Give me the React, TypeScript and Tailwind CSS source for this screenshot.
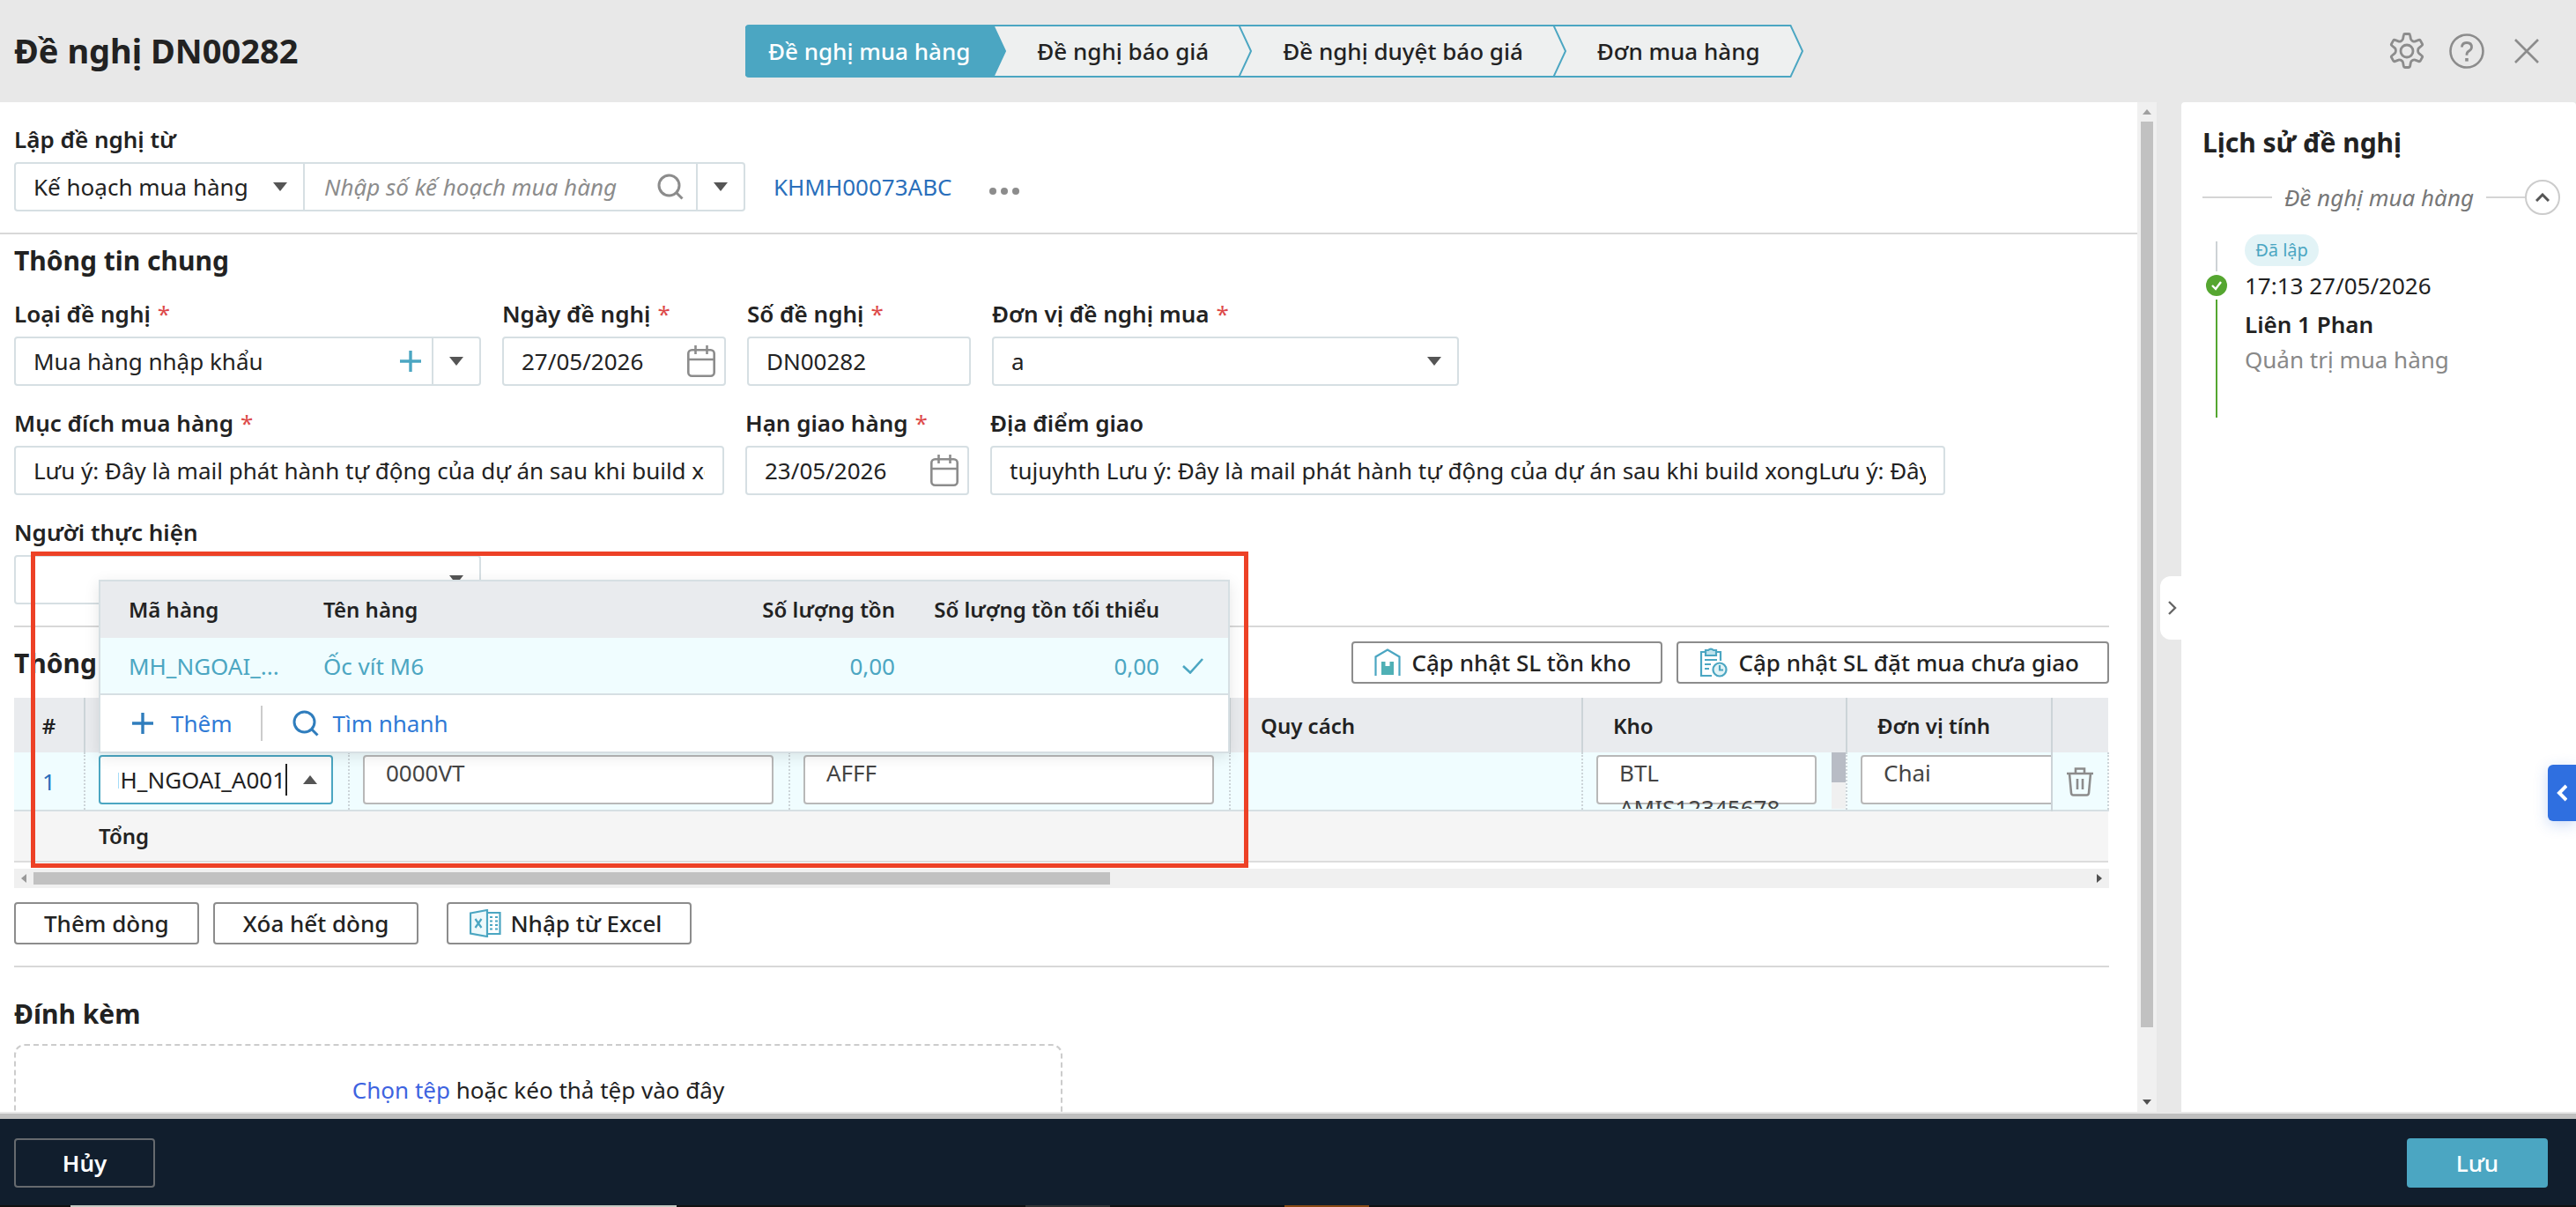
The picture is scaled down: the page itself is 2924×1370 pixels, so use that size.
import { useEffect, useRef } from "react";
import type { ReactNode } from "react";

type IconProps = { className?: string };

const controlClass =
  "flex h-14 items-center rounded-[4px] border-2 border-[#d6dfe3] bg-white";

/* ---------- Icons ---------- */

function GearIcon() {
  return (
    <svg viewBox="0 0 40 42" className="h-[42px] w-10" fill="none" stroke="#8c8c8c" strokeWidth="2.8" strokeLinejoin="round">
      <path d="M16.4 2.800q.2-1.300 1.500-1.300h4.200q1.300 0 1.500 1.300l.8 4.200q.3 1.500 1.600 2.200l.8.500q1.300.8 2.700.2l4-1.500q1.200-.4 1.900.700l2 3.600q.7 1.200-.4 2l-3.200 2.700q-1.200 1-1.200 2.500v1.200q0 1.500 1.200 2.500l3.200 2.700q1.100.8.4 2l-2 3.600q-.7 1.100-1.900.7l-4-1.500q-1.400-.6-2.700.2l-.8.5q-1.300.7-1.600 2.200l-.8 4.200q-.2 1.300-1.500 1.300h-4.200q-1.300 0-1.500-1.300l-.8-4.200q-.3-1.500-1.600-2.200l-.8-.5q-1.300-.8-2.700-.2l-4 1.500q-1.200.4-1.900-.7l-2-3.600q-.7-1.200.4-2l3.200-2.700q1.200-1 1.200-2.500v-1.200q0-1.500-1.200-2.500l-3.200-2.700q-1.100-.8-.4-2l2-3.600q.7-1.100 1.900-.7l4 1.500q1.400.6 2.700-.2l.8-.5q1.300-.7 1.600-2.200z" />
      <circle cx="20" cy="21" r="7" />
    </svg>
  );
}

function HelpIcon() {
  return (
    <svg viewBox="0 0 40 40" className="size-10" fill="none" stroke="#8c8c8c" strokeWidth="2.6">
      <circle cx="20" cy="20" r="18.500" />
      <path d="M14.500 15.500q0-5 5.500-5t5.500 5q0 2.600-2.800 4.300-2.700 1.700-2.700 4v1" strokeWidth="2.800" />
      <path d="M20 28v3.600" strokeWidth="3.600" />
    </svg>
  );
}

function CloseIcon() {
  return (
    <svg viewBox="0 0 28 28" className="size-7" stroke="#8c8c8c" strokeWidth="2.600">
      <path d="M1 1l26 26M27 1L1 27" />
    </svg>
  );
}

function SearchIcon({ className = "" }: IconProps) {
  return (
    <svg viewBox="0 0 30 30" className={`size-[30px] shrink-0 ${className}`} fill="none" stroke="currentColor" strokeWidth="3">
      <circle cx="13.500" cy="13.500" r="11.500" />
      <path d="M22 22l6.500 6.500" />
    </svg>
  );
}

function PlusIcon({ className = "" }: IconProps) {
  return (
    <svg viewBox="0 0 24 24" className={`size-6 shrink-0 ${className}`} stroke="currentColor" strokeWidth="3.4">
      <path d="M12 0v24M0 12h24" />
    </svg>
  );
}

function CalendarIcon() {
  return (
    <svg viewBox="0 0 32 36" className="h-9 w-8 shrink-0" fill="none" stroke="#8c8c8c" strokeWidth="2.600">
      <rect x="1.300" y="5.300" width="29.400" height="29.400" rx="4" />
      <path d="M1 16h30M9.500 0v10M22.500 0v10" />
    </svg>
  );
}

function Caret({ className = "" }: IconProps) {
  return (
    <svg viewBox="0 0 16 10" className={`h-[10px] w-4 shrink-0 ${className}`} fill="#555">
      <path d="M0 0h16L8 10z" />
    </svg>
  );
}

function WarehouseIcon() {
  return (
    <svg viewBox="0 0 30 32" className="h-8 w-[30px] shrink-0" fill="none" stroke="#4ba6c2" strokeWidth="2.200">
      <path d="M1.500 31V9.500L15 1.500l13.500 8V31" />
      <path d="M8 30V15h4.500v5h5v-5H22v15z" fill="#4fb0b5" stroke="none" />
    </svg>
  );
}

function OrderClockIcon() {
  return (
    <svg viewBox="0 0 32 34" className="h-[34px] w-8 shrink-0" fill="none" stroke="#4ba6c2" strokeWidth="2.200">
      <path d="M14 32H2V5h4M20 5h4v10" />
      <path d="M7 3h3q3-3 6 0h3v6H7z" fill="#bfe2ec" />
      <path d="M6 14h14M6 19h7M6 24h5" />
      <circle cx="23" cy="25" r="7.500" fill="#e2f3f6" />
      <path d="M23 20v5.500h4" />
    </svg>
  );
}

function ExcelIcon() {
  return (
    <svg viewBox="0 0 36 32" className="h-8 w-9 shrink-0" fill="none" stroke="#4ba6c2" strokeWidth="2.200">
      <path d="M1 4.500L20 1v30L1 27.500z" fill="#eef9fb" />
      <path d="M20 4h14.500v24H20" />
      <path d="M6.500 11l7 10M13.500 11l-7 10" />
      <path d="M23 9h3M29 9h3M23 13.500h3M29 13.500h3M23 18h3M29 18h3M23 22.500h3M29 22.500h3" />
    </svg>
  );
}

function TrashIcon() {
  return (
    <svg viewBox="0 0 30 34" className="h-[34px] w-[30px]" fill="none" stroke="#8c8c8c" strokeWidth="2.600">
      <path d="M0 8h30M10 8V2.500h10V8M3 8l2 22q.2 2.500 2.500 2.500h15q2.300 0 2.500-2.500l2-22M12 14v12M18 14v12" />
    </svg>
  );
}

/* ---------- Form parts ---------- */

function Field({
  id,
  label,
  required,
  className = "",
  children,
}: {
  id: string;
  label: string;
  required?: boolean;
  className?: string;
  children: ReactNode;
}) {
  return (
    <div className={className}>
      <label htmlFor={id} className="flex h-12 items-center pb-1 font-semibold">
        {label}
        {required && <span className="ml-2 font-normal text-[#dd4a4a]">*</span>}
      </label>
      {children}
    </div>
  );
}

function TextField({ id, value }: { id: string; value: string }) {
  return (
    <div className={`${controlClass} px-5`}>
      <input id={id} defaultValue={value} className="w-full min-w-0 outline-none" />
    </div>
  );
}

function DateField({ id, value }: { id: string; value: string }) {
  return (
    <div className={`${controlClass} pr-2.5 pl-5`}>
      <input id={id} defaultValue={value} className="w-full min-w-0 outline-none" />
      <button type="button" aria-label="Chọn ngày">
        <CalendarIcon />
      </button>
    </div>
  );
}

function SelectField({ id, value }: { id: string; value: string }) {
  return (
    <div className="relative">
      <select
        id={id}
        defaultValue={value}
        className="h-14 w-full appearance-none rounded-[4px] border-2 border-[#d6dfe3] bg-white px-5 outline-none"
      >
        <option>{value}</option>
      </select>
      <Caret className="pointer-events-none absolute top-[23px] right-5" />
    </div>
  );
}

function OutlineButton({ children, className = "" }: { children: ReactNode; className?: string }) {
  return (
    <button
      type="button"
      className={`flex h-12 items-center rounded-[4px] border-2 border-[#8c8c8c] bg-white font-medium ${className}`}
    >
      {children}
    </button>
  );
}

/* ---------- Header ---------- */

const STEPS = ["Đề nghị mua hàng", "Đề nghị báo giá", "Đề nghị duyệt báo giá", "Đơn mua hàng"];

function Stepper() {
  return (
    <ol className="flex h-[60px] rounded-l-[4px] border-y-2 border-[#4ba6c2] font-medium">
      {STEPS.map((step, i) => (
        <li
          key={step}
          className={
            i === 0
              ? "relative flex items-center bg-[#4ba6c2] px-[26px] text-white"
              : "relative flex items-center bg-[#eef0f0] pr-[34px] pl-[50px]"
          }
        >
          {step}
          <svg viewBox="0 0 16 60" className="absolute -top-0.5 left-full z-10 h-[60px] w-4">
            <path d="M0 1l14 29L0 59z" fill={i === 0 ? "#4ba6c2" : "#eef0f0"} />
            <path d="M0 0l14 30L0 60" fill="none" stroke="#4ba6c2" strokeWidth="2" />
          </svg>
        </li>
      ))}
    </ol>
  );
}

function Header() {
  return (
    <header className="flex h-[116px] shrink-0 items-center bg-[#e8e8e8] pr-[42px] pl-4">
      <h1 className="w-[830px] pb-0.5 text-[38px] font-bold">Đề nghị DN00282</h1>
      <Stepper />
      <div className="ml-auto flex items-center gap-7">
        <button type="button" aria-label="Thiết lập">
          <GearIcon />
        </button>
        <button type="button" aria-label="Trợ giúp">
          <HelpIcon />
        </button>
        <button type="button" aria-label="Đóng" className="ml-1.5">
          <CloseIcon />
        </button>
      </div>
    </header>
  );
}

/* ---------- Sections ---------- */

function SourceSection() {
  return (
    <section className="border-b-2 border-[#d8d8d8] px-4 pt-5 pb-6">
      <label htmlFor="source" className="flex h-12 items-center pb-1 font-semibold">
        Lập đề nghị từ
      </label>
      <div className="flex items-center">
        <div className="relative w-[330px]">
          <select
            id="source"
            className="h-14 w-full appearance-none rounded-l-[4px] border-2 border-[#d6dfe3] bg-white px-5 outline-none"
          >
            <option>Kế hoạch mua hàng</option>
          </select>
          <Caret className="pointer-events-none absolute top-[23px] right-5" />
        </div>
        <div className="flex h-14 w-[500px] items-center rounded-r-[4px] border-2 border-l-0 border-[#d6dfe3]">
          <input
            aria-label="Số kế hoạch mua hàng"
            placeholder="Nhập số kế hoạch mua hàng"
            className="min-w-0 flex-1 pl-[22px] outline-none placeholder:text-[#8c8c8c] placeholder:italic"
          />
          <SearchIcon className="mr-3.5 text-[#8c8c8c]" />
          <button
            type="button"
            aria-label="Mở danh sách"
            className="flex h-full w-[54px] items-center justify-center border-l-2 border-[#d6dfe3]"
          >
            <Caret />
          </button>
        </div>
        <a href="#khmh" className="ml-8 text-[#2a6fbb]">
          KHMH00073ABC
        </a>
        <button type="button" aria-label="Thêm lựa chọn" className="mt-2.5 ml-[42px] flex gap-[5px]">
          <span className="size-2 rounded-full bg-[#8c8c8c]" />
          <span className="size-2 rounded-full bg-[#8c8c8c]" />
          <span className="size-2 rounded-full bg-[#8c8c8c]" />
        </button>
      </div>
    </section>
  );
}

function GeneralSection() {
  return (
    <section className="mr-8 ml-4 border-b-2 border-[#d8d8d8] pt-2.5 pb-6">
      <h2 className="h-[58px] text-[30px] leading-10 font-bold">Thông tin chung</h2>
      <div className="flex gap-6">
        <Field id="type" label="Loại đề nghị" required className="w-[530px]">
          <div className={controlClass}>
            <input id="type" defaultValue="Mua hàng nhập khẩu" className="min-w-0 flex-1 pl-5 outline-none" />
            <button type="button" aria-label="Thêm loại đề nghị" className="mr-3 text-[#4ba6c2]">
              <PlusIcon />
            </button>
            <button
              type="button"
              aria-label="Mở danh sách"
              className="flex h-full w-[54px] items-center justify-center border-l-2 border-[#d6dfe3]"
            >
              <Caret />
            </button>
          </div>
        </Field>
        <Field id="date" label="Ngày đề nghị" required className="w-[254px]">
          <DateField id="date" value="27/05/2026" />
        </Field>
        <Field id="number" label="Số đề nghị" required className="w-[254px]">
          <TextField id="number" value="DN00282" />
        </Field>
        <Field id="unit" label="Đơn vị đề nghị mua" required className="w-[530px]">
          <SelectField id="unit" value="a" />
        </Field>
      </div>
      <div className="mt-5 flex gap-6">
        <Field id="purpose" label="Mục đích mua hàng" required className="w-[806px]">
          <TextField
            id="purpose"
            value="Lưu ý: Đây là mail phát hành tự động của dự án sau khi build xong"
          />
        </Field>
        <Field id="deadline" label="Hạn giao hàng" required className="w-[254px]">
          <DateField id="deadline" value="23/05/2026" />
        </Field>
        <Field id="place" label="Địa điểm giao" className="w-[1084px]">
          <TextField
            id="place"
            value="tujuyhth Lưu ý: Đây là mail phát hành tự động của dự án sau khi build xongLưu ý: Đây là mail"
          />
        </Field>
      </div>
      <Field id="assignee" label="Người thực hiện" className="mt-5 w-[530px]">
        <SelectField id="assignee" value="" />
      </Field>
    </section>
  );
}

function ItemPopup() {
  return (
    <div className="absolute bottom-full left-0 z-20 mb-0.5 w-[1284px] border-2 border-[#d6dfe3] bg-white shadow-[0_4px_16px_rgba(0,0,0,0.1)]">
      <table className="w-full table-fixed text-left">
        <colgroup>
          <col className="w-[253px]" />
          <col className="w-[450px]" />
          <col className="w-[215px]" />
          <col className="w-[300px]" />
          <col />
        </colgroup>
        <thead>
          <tr className="h-16 bg-[#e9ebee] text-[24px]">
            <th className="pl-8 font-semibold">Mã hàng</th>
            <th className="font-semibold">Tên hàng</th>
            <th className="pr-4 text-right font-semibold">Số lượng tồn</th>
            <th className="pr-4 text-right font-semibold">Số lượng tồn tối thiểu</th>
            <th />
          </tr>
        </thead>
        <tbody>
          <tr className="h-16 border-b-2 border-[#d6dfe3] bg-[#f0fdff] text-[#4ba6c2]">
            <td className="pl-8">MH_NGOAI_...</td>
            <td>Ốc vít M6</td>
            <td className="pr-4 text-right">0,00</td>
            <td className="pr-4 text-right">0,00</td>
            <td>
              <svg viewBox="0 0 24 18" className="ml-2.5 h-[18px] w-6" fill="none" stroke="#4ba6c2" strokeWidth="2.600">
                <path d="M1 9l8 7.500L23 1" />
              </svg>
            </td>
          </tr>
        </tbody>
      </table>
      <div className="flex h-16 items-center pl-9 text-[#2f7ad6]">
        <button type="button" className="flex items-center gap-5">
          <PlusIcon className="text-[#2f7dbd]" />
          Thêm
        </button>
        <span className="mr-[34px] ml-8 h-10 w-0.5 bg-[#ccc]" />
        <button type="button" className="flex items-center gap-4">
          <SearchIcon className="text-[#2f7dbd]" />
          Tìm nhanh
        </button>
      </div>
    </div>
  );
}

function ItemCodeCell() {
  const inputRef = useRef<HTMLInputElement>(null);

  // Keep the end of a long code in view
  useEffect(() => {
    const input = inputRef.current;
    if (input) input.scrollLeft = input.scrollWidth;
  }, []);

  return (
    <div className="relative ml-[15px] w-[266px]">
      <ItemPopup />
      <div className="flex h-14 items-center rounded-[4px] border-2 border-[#4ba6c2] bg-white pr-4 pl-5">
        <input
          ref={inputRef}
          aria-label="Mã hàng"
          defaultValue="MH_NGOAI_A001"
          className="w-[190px] min-w-0 outline-none"
        />
        <span className="h-9 w-0.5 shrink-0 bg-[#222]" />
        <Caret className="ml-auto rotate-180" />
      </div>
    </div>
  );
}

function CellBox({ label, value, className = "" }: { label: string; value: string; className?: string }) {
  return (
    <textarea
      aria-label={label}
      defaultValue={value}
      className={`ml-[15px] block h-14 resize-none overflow-hidden rounded-[4px] border-2 border-[#b8b8b8] bg-white px-6 leading-9 text-[#444] outline-none ${className}`}
    />
  );
}

const headCell = "border-r-2 border-[#ccd4d8] pt-0.5 pl-[34px] font-semibold";
const bodyCell = "border-r-2 border-dotted border-[#ccd4d8] align-top pt-[3px]";

function ItemTable() {
  return (
    <table className="w-full table-fixed text-left">
      <colgroup>
        <col className="w-20" />
        <col className="w-[300px]" />
        <col className="w-[500px]" />
        <col className="w-[500px]" />
        <col className="w-[400px]" />
        <col className="w-[300px]" />
        <col />
        <col className="w-16" />
      </colgroup>
      <thead>
        <tr className="h-[62px] bg-[#e9ebee] text-[24px]">
          <th className="border-r-2 border-[#ccd4d8] pt-0.5 text-center font-semibold">#</th>
          <th className={headCell} aria-label="Mã hàng" />
          <th className={headCell} aria-label="Tên hàng" />
          <th className={headCell} aria-label="Mô tả" />
          <th className={headCell}>Quy cách</th>
          <th className={headCell}>Kho</th>
          <th className={headCell}>Đơn vị tính</th>
          <th />
        </tr>
      </thead>
      <tbody>
        <tr className="h-[66px] border-b-2 border-[#d6dfe3] bg-[#f0fdff]">
          <td className="border-r-2 border-dotted border-[#ccd4d8] text-center text-[#2a6fbb]">1</td>
          <td className={bodyCell}>
            <ItemCodeCell />
          </td>
          <td className={bodyCell}>
            <CellBox label="Tên hàng" value="0000VT" className="w-[466px]" />
          </td>
          <td className={bodyCell}>
            <CellBox label="Mô tả" value="AFFF" className="w-[466px]" />
          </td>
          <td className={bodyCell} />
          <td className="border-r-2 border-dotted border-[#ccd4d8] align-top">
            <div className="flex h-16 justify-between overflow-hidden">
              <div className="mt-[3px] ml-[15px] h-14 w-[250px] rounded-[4px] border-2 border-[#b8b8b8] bg-white px-6 text-[#444]">
                <span className="-mt-0.5 block leading-10">BTL AMIS12345678</span>
              </div>
              <div className="w-4 bg-[#f0f0f0]">
                <div className="h-[34px] bg-[#b8bcc5]" />
              </div>
            </div>
          </td>
          <td className="overflow-hidden border-r-2 border-[#ccd4d8] pt-[3px] align-top">
            <CellBox label="Đơn vị tính" value="Chai" className="w-[266px]" />
          </td>
          <td className="border-r-2 border-dotted border-[#ccd4d8]">
            <button type="button" aria-label="Xóa dòng" className="mx-auto block">
              <TrashIcon />
            </button>
          </td>
        </tr>
      </tbody>
      <tfoot>
        <tr className="h-[58px] border-b-2 border-[#dcdcdc] bg-[#f5f5f5] text-[24px]">
          <td />
          <td colSpan={7} className="pl-4 font-semibold">
            Tổng
          </td>
        </tr>
      </tfoot>
    </table>
  );
}

function DetailSection() {
  return (
    <section className="mx-4 border-b-2 border-[#d8d8d8] pt-4 pb-6">
      <div className="flex items-center gap-4">
        <h2 className="mt-0.5 mr-auto text-[30px] leading-10 font-bold">Thông</h2>
        <OutlineButton className="gap-3 pr-[34px] pl-6">
          <WarehouseIcon />
          Cập nhật SL tồn kho
        </OutlineButton>
        <OutlineButton className="gap-3 pr-8 pl-6">
          <OrderClockIcon />
          Cập nhật SL đặt mua chưa giao
        </OutlineButton>
      </div>
      <div className="relative mt-4">
        <ItemTable />
        <div className="pointer-events-none absolute -top-[166px] left-[19px] z-30 h-[359px] w-[1382px] border-5 border-[#ed4126]" />
      </div>
      <div className="mt-[7px] flex h-[22px] items-center bg-[#f0f0f0]">
        <svg viewBox="0 0 6 10" className="ml-2 h-2.5 w-1.5" fill="#999">
          <path d="M6 0v10L0 5z" />
        </svg>
        <div className="ml-2 h-3.5 w-[1222px] bg-[#c1c1c1]" />
        <svg viewBox="0 0 6 10" className="mr-2 ml-auto h-2.5 w-1.5" fill="#505050">
          <path d="M0 0v10l6-5z" />
        </svg>
      </div>
      <div className="mt-4 flex">
        <OutlineButton className="px-8">Thêm dòng</OutlineButton>
        <OutlineButton className="ml-4 px-8">Xóa hết dòng</OutlineButton>
        <OutlineButton className="ml-8 gap-2.5 pr-8 pl-6">
          <ExcelIcon />
          Nhập từ Excel
        </OutlineButton>
      </div>
    </section>
  );
}

function AttachSection() {
  return (
    <section className="mx-4 pt-[31px]">
      <h2 className="h-14 text-[30px] leading-[44px] font-bold">Đính kèm</h2>
      <div className="w-[1190px] rounded-[12px] border-2 border-dashed border-[#ccc] pt-[30px] pb-8 text-center leading-10">
        <p>
          <a href="#upload" className="text-[#3d63e0]">
            Chọn tệp
          </a>{" "}
          hoặc kéo thả tệp vào đây
        </p>
        <p>Có thể tải tối đa 5 tệp</p>
      </div>
    </section>
  );
}

function VerticalScrollbar() {
  return (
    <div className="flex w-[22px] shrink-0 flex-col items-center bg-[#f0f0f0]">
      <svg viewBox="0 0 10 6" className="my-2 h-1.5 w-2.5 shrink-0" fill="#a0a0a0">
        <path d="M0 6h10L5 0z" />
      </svg>
      <div className="w-3.5 grow-[1028] bg-[#c1c1c1]" />
      <div className="grow-[82]" />
      <svg viewBox="0 0 10 6" className="mb-2 h-1.5 w-2.5 shrink-0" fill="#505050">
        <path d="M0 0h10L5 6z" />
      </svg>
    </div>
  );
}

function HistoryPanel() {
  return (
    <aside className="relative w-[448px] shrink-0 rounded-t-[4px] bg-white pt-6">
      <button
        type="button"
        aria-label="Thu gọn lịch sử"
        className="absolute top-[538px] -left-6 flex h-[72px] w-6 items-center justify-center rounded-l-[12px] bg-white"
      >
        <svg viewBox="0 0 10 16" className="ml-1 h-4 w-2.5" fill="none" stroke="#666" strokeWidth="2.400">
          <path d="M1 1l7 7-7 7" />
        </svg>
      </button>
      <h2 className="pl-6 text-[30px] leading-[44px] font-bold">Lịch sử đề nghị</h2>
      <div className="mt-5 flex items-center pr-[18px] pl-6">
        <span className="h-0.5 flex-1 bg-[#d5d5d5]" />
        <span className="px-3.5 text-[#777] italic">Đề nghị mua hàng</span>
        <span className="h-0.5 w-11 bg-[#d5d5d5]" />
        <button
          type="button"
          aria-label="Thu gọn"
          className="flex size-10 items-center justify-center rounded-full border-2 border-[#ccc]"
        >
          <svg viewBox="0 0 16 10" className="h-2.5 w-4" fill="none" stroke="#555" strokeWidth="3">
            <path d="M1 9l7-7 7 7" />
          </svg>
        </button>
      </div>
      <div className="mt-[22px] flex pl-7">
        <div className="flex w-6 flex-col items-center">
          <span className="mt-2 h-[34px] w-0.5 bg-[#cdd2d5]" />
          <svg viewBox="0 0 24 24" className="my-1 size-6">
            <circle cx="12" cy="12" r="12" fill="#55a630" />
            <path d="M7 12l4 4 6-8" fill="none" stroke="#fff" strokeWidth="2.400" />
          </svg>
          <span className="h-[134px] w-0.5 bg-[#55a630]" />
        </div>
        <div className="ml-5">
          <span className="flex h-9 w-[84px] items-center justify-center rounded-full bg-[#e2f3f6] text-[20px] text-[#4ba6c2]">
            Đã lập
          </span>
          <p className="mt-0.5 leading-10">17:13 27/05/2026</p>
          <p className="mt-1 leading-10 font-semibold">Liên 1 Phan</p>
          <p className="leading-10 text-[#888]">Quản trị mua hàng</p>
        </div>
      </div>
    </aside>
  );
}

function Footer() {
  return (
    <footer className="shrink-0 border-t-6 border-[#bfbfbf] bg-[#111e2d]">
      <div className="flex h-[98px] items-center justify-between pt-0.5 pr-8 pl-4 text-white">
        <button type="button" className="h-14 w-40 rounded-[4px] border-2 border-[#666a6e] font-semibold">
          Hủy
        </button>
        <button type="button" className="h-14 w-40 rounded-[4px] bg-[#4ba6c2] font-medium">
          Lưu
        </button>
      </div>
      <div className="flex h-0.5 bg-[#111]">
        <span className="ml-20 w-[688px] bg-[#c4c9c2]" />
        <span className="ml-[396px] w-24 bg-[#333]" />
        <span className="ml-[198px] w-24 bg-[#8a4a14]" />
      </div>
    </footer>
  );
}

export default function App() {
  return (
    <div className="relative flex h-screen flex-col overflow-hidden bg-[#e8e8e8] font-['Noto_Sans',sans-serif] text-[26px] leading-9 text-[#222]">
      <Header />
      <div className="mb-0.5 flex min-h-0 flex-1">
        <main className="min-w-0 flex-1 overflow-hidden bg-white">
          <SourceSection />
          <GeneralSection />
          <div className="pr-4">
            <DetailSection />
            <AttachSection />
          </div>
        </main>
        <VerticalScrollbar />
        <div className="ml-7 flex shrink-0">
          <HistoryPanel />
        </div>
      </div>
      <Footer />
      <button
        type="button"
        aria-label="Mở tiện ích"
        className="absolute top-[868px] right-0 flex h-16 w-8 items-center justify-center rounded-l-[6px] bg-[#2f6fe0] shadow-[0_4px_16px_rgba(47,111,224,0.25)]"
      >
        <svg viewBox="0 0 12 20" className="h-5 w-3" fill="none" stroke="#fff" strokeWidth="4">
          <path d="M11 2l-8 8 8 8" />
        </svg>
      </button>
    </div>
  );
}
